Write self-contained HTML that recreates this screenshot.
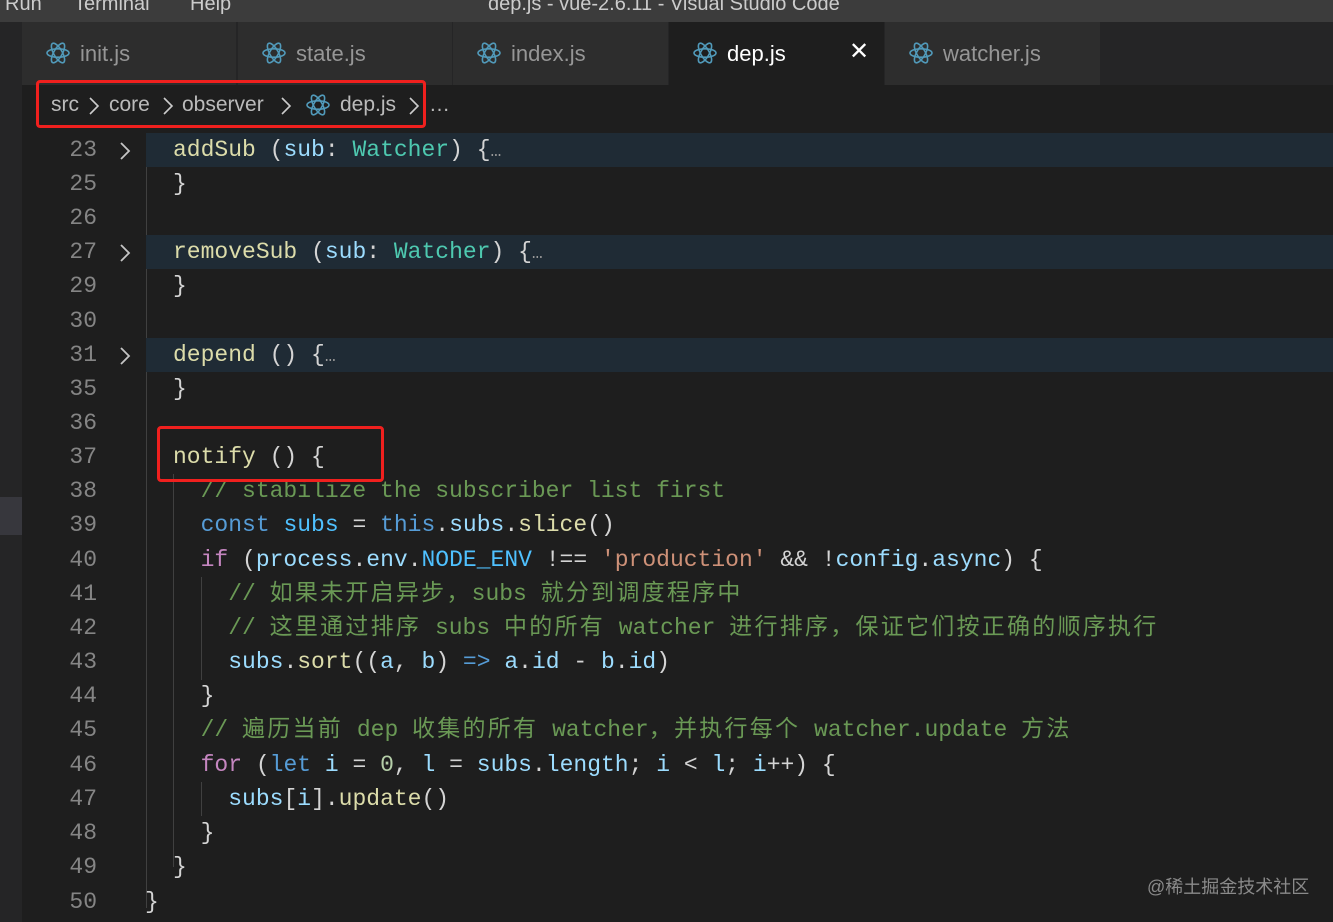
<!DOCTYPE html>
<html><head><meta charset="utf-8"><style>
*{margin:0;padding:0;box-sizing:border-box}
body{width:1333px;height:922px;background:#1e1e1e;overflow:hidden;position:relative;font-family:"Liberation Sans","Noto Sans CJK SC",sans-serif}
.title{position:absolute;left:0;top:0;width:1333px;height:22px;background:#3c3c3c;color:#ccc;font-size:20px;line-height:0;overflow:hidden}
.title span{position:absolute;top:-6px;line-height:20px}
.side{position:absolute;left:0;top:22px;width:22px;height:900px;background:#252526}
.tabs{position:absolute;left:22px;top:22px;width:1311px;height:63px;background:#252526}
.tab{position:absolute;top:0;height:63px;background:#2d2d2d;color:#969696;font-size:22px;line-height:63px;border-right:1px solid #252526}
.tab.a{background:#1e1e1e;color:#fff}
.tab svg{position:absolute;top:20px}
.tab span{position:absolute;top:0}
.bc{position:absolute;left:22px;top:85px;width:1311px;height:40px;background:#1e1e1e;color:#bbb;font-size:21px;line-height:40px}
.bc svg.ch{position:absolute;top:11px}
.code{position:absolute;left:22px;top:127px;width:1311px;height:795px;background:#1e1e1e}
.ln{position:absolute;left:0;width:75px;text-align:right;color:#858585;font:23px/34px "Liberation Mono",monospace}
.l{position:absolute;left:151px;height:34px;white-space:pre;font:23px/34px "Liberation Mono","Noto Sans CJK SC",monospace;color:#d4d4d4}
.z{letter-spacing:2.25px}
.hl{position:absolute;left:124px;width:1187px;height:34px;background:#1f2b35}
.f{color:#dcdcaa}.k{color:#569cd6}.v{color:#9cdcfe}.t{color:#4ec9b0}.c{color:#6a9955}.s{color:#ce9178}.p{color:#c586c0}.cn{color:#4fc1ff}
.e{color:#999;font-size:18px}
.g{position:absolute;width:1px;background:#404040}
.box{position:absolute;border:3px solid #f0201e;border-radius:4px}
.chev{position:absolute;left:96px}
</style></head><body>
<div class="title"><span style="left:5px">Run</span><span style="left:74px">Terminal</span><span style="left:190px">Help</span><span style="left:488px">dep.js - vue-2.6.11 - Visual Studio Code</span></div>
<div class="side"></div>
<div style="position:absolute;left:0;top:497px;width:22px;height:38px;background:#37373d"></div>
<div class="tabs">
<div class="tab" style="left:0;width:215px"><svg style="left:24px" width="24" height="22" viewBox="-12 -11 24 22"><g fill="none" stroke="#519aba" stroke-width="1.6"><ellipse rx="11" ry="4.2"/><ellipse rx="11" ry="4.2" transform="rotate(60)"/><ellipse rx="11" ry="4.2" transform="rotate(120)"/></g></svg><span style="left:58px">init.js</span></div>
<div class="tab" style="left:216px;width:215px"><svg style="left:24px" width="24" height="22" viewBox="-12 -11 24 22"><g fill="none" stroke="#519aba" stroke-width="1.6"><ellipse rx="11" ry="4.2"/><ellipse rx="11" ry="4.2" transform="rotate(60)"/><ellipse rx="11" ry="4.2" transform="rotate(120)"/></g></svg><span style="left:58px">state.js</span></div>
<div class="tab" style="left:431px;width:216px"><svg style="left:24px" width="24" height="22" viewBox="-12 -11 24 22"><g fill="none" stroke="#519aba" stroke-width="1.6"><ellipse rx="11" ry="4.2"/><ellipse rx="11" ry="4.2" transform="rotate(60)"/><ellipse rx="11" ry="4.2" transform="rotate(120)"/></g></svg><span style="left:58px">index.js</span></div>
<div class="tab a" style="left:647px;width:216px"><svg style="left:24px" width="24" height="22" viewBox="-12 -11 24 22"><g fill="none" stroke="#519aba" stroke-width="1.6"><ellipse rx="11" ry="4.2"/><ellipse rx="11" ry="4.2" transform="rotate(60)"/><ellipse rx="11" ry="4.2" transform="rotate(120)"/></g></svg><span style="left:58px">dep.js</span><span style="left:180px;font-size:24px;top:-2px">✕</span></div>
<div class="tab" style="left:863px;width:216px"><svg style="left:24px" width="24" height="22" viewBox="-12 -11 24 22"><g fill="none" stroke="#519aba" stroke-width="1.6"><ellipse rx="11" ry="4.2"/><ellipse rx="11" ry="4.2" transform="rotate(60)"/><ellipse rx="11" ry="4.2" transform="rotate(120)"/></g></svg><span style="left:58px">watcher.js</span></div>
</div>
<div class="bc"><span style="position:absolute;left:29px">src</span>
<svg class="ch" style="left:66px" width="12" height="20" viewBox="0 0 12 20"><path d="M2 2 L10 10 L2 18" fill="none" stroke="#ccc" stroke-width="1.6"/></svg>
<span style="position:absolute;left:87px">core</span>
<svg class="ch" style="left:140px" width="12" height="20" viewBox="0 0 12 20"><path d="M2 2 L10 10 L2 18" fill="none" stroke="#ccc" stroke-width="1.6"/></svg>
<span style="position:absolute;left:160px">observer</span>
<svg class="ch" style="left:258px" width="12" height="20" viewBox="0 0 12 20"><path d="M2 2 L10 10 L2 18" fill="none" stroke="#ccc" stroke-width="1.6"/></svg>
<svg style="position:absolute;left:284px;top:9px" width="24" height="22" viewBox="-12 -11 24 22"><g fill="none" stroke="#519aba" stroke-width="1.6"><ellipse rx="11" ry="4.2"/><ellipse rx="11" ry="4.2" transform="rotate(60)"/><ellipse rx="11" ry="4.2" transform="rotate(120)"/></g></svg><span style="position:absolute;left:318px">dep.js</span>
<svg class="ch" style="left:386px" width="12" height="20" viewBox="0 0 12 20"><path d="M2 2 L10 10 L2 18" fill="none" stroke="#ccc" stroke-width="1.6"/></svg>
<span style="position:absolute;left:407px">…</span></div>
<div class="code">
<div class="g" style="left:124px;top:6px;height:775px"></div>
<div class="g" style="left:151px;top:347px;height:393px"></div>
<div class="g" style="left:179px;top:450px;height:103px"></div>
<div class="g" style="left:179px;top:655px;height:34px"></div>
<div class="hl" style="top:6px"></div><div class="hl" style="top:108px"></div><div class="hl" style="top:211px"></div>
<svg class="chev" style="top:14px" width="14" height="20" viewBox="0 0 14 20"><path d="M3 2 L11 10 L3 18" fill="none" stroke="#c5c5c5" stroke-width="1.8"/></svg>
<svg class="chev" style="top:116px" width="14" height="20" viewBox="0 0 14 20"><path d="M3 2 L11 10 L3 18" fill="none" stroke="#c5c5c5" stroke-width="1.8"/></svg>
<svg class="chev" style="top:219px" width="14" height="20" viewBox="0 0 14 20"><path d="M3 2 L11 10 L3 18" fill="none" stroke="#c5c5c5" stroke-width="1.8"/></svg>
<div class="ln" style="top:6px">23</div>
<div class="l" style="top:6px"><span class="f">addSub</span> (<span class="v">sub</span>: <span class="t">Watcher</span>) {<span class="e">…</span></div>
<div class="ln" style="top:40px">25</div><div class="l" style="top:40px">}</div>
<div class="ln" style="top:74px">26</div>
<div class="ln" style="top:108px">27</div>
<div class="l" style="top:108px"><span class="f">removeSub</span> (<span class="v">sub</span>: <span class="t">Watcher</span>) {<span class="e">…</span></div>
<div class="ln" style="top:142px">29</div><div class="l" style="top:142px">}</div>
<div class="ln" style="top:177px">30</div>
<div class="ln" style="top:211px">31</div>
<div class="l" style="top:211px"><span class="f">depend</span> () {<span class="e">…</span></div>
<div class="ln" style="top:245px">35</div><div class="l" style="top:245px">}</div>
<div class="ln" style="top:279px">36</div>
<div class="ln" style="top:313px">37</div><div class="l" style="top:313px"><span class="f">notify</span> () {</div>
<div class="ln" style="top:347px">38</div><div class="l" style="top:347px">  <span class="c">// stabilize the subscriber list first</span></div>
<div class="ln" style="top:381px">39</div><div class="l" style="top:381px">  <span class="k">const</span> <span class="cn">subs</span> = <span class="k">this</span>.<span class="v">subs</span>.<span class="f">slice</span>()</div>
<div class="ln" style="top:416px">40</div><div class="l" style="top:416px">  <span class="p">if</span> (<span class="v">process</span>.<span class="v">env</span>.<span class="cn">NODE_ENV</span> !== <span class="s">'production'</span> &amp;&amp; !<span class="v">config</span>.<span class="v">async</span>) {</div>
<div class="ln" style="top:450px">41</div><div class="l" style="top:450px">    <span class="c">// <span class="z">如果未开启异步，</span>subs <span class="z">就分到调度程序中</span></span></div>
<div class="ln" style="top:484px">42</div><div class="l" style="top:484px">    <span class="c">// <span class="z">这里通过排序</span> subs <span class="z">中的所有</span> watcher <span class="z">进行排序，保证它们按正确的顺序执行</span></span></div>
<div class="ln" style="top:518px">43</div><div class="l" style="top:518px">    <span class="v">subs</span>.<span class="f">sort</span>((<span class="v">a</span>, <span class="v">b</span>) <span class="k">=&gt;</span> <span class="v">a</span>.<span class="v">id</span> - <span class="v">b</span>.<span class="v">id</span>)</div>
<div class="ln" style="top:552px">44</div><div class="l" style="top:552px">  }</div>
<div class="ln" style="top:586px">45</div><div class="l" style="top:586px">  <span class="c">// <span class="z">遍历当前</span> dep <span class="z">收集的所有</span> watcher<span class="z">，并执行每个</span> watcher.update <span class="z">方法</span></span></div>
<div class="ln" style="top:621px">46</div><div class="l" style="top:621px">  <span class="p">for</span> (<span class="k">let</span> <span class="v">i</span> = <span style="color:#b5cea8">0</span>, <span class="v">l</span> = <span class="v">subs</span>.<span class="v">length</span>; <span class="v">i</span> &lt; <span class="v">l</span>; <span class="v">i</span>++) {</div>
<div class="ln" style="top:655px">47</div><div class="l" style="top:655px">    <span class="v">subs</span>[<span class="v">i</span>].<span class="f">update</span>()</div>
<div class="ln" style="top:689px">48</div><div class="l" style="top:689px">  }</div>
<div class="ln" style="top:723px">49</div><div class="l" style="top:723px">}</div>
<div class="ln" style="top:758px">50</div><div class="l" style="top:758px;left:123px">}</div>
</div>
<div class="box" style="left:36px;top:80px;width:390px;height:48px"></div>
<div class="box" style="left:157px;top:426px;width:227px;height:56px"></div>
<div style="position:absolute;left:1147px;top:873px;color:#8a8a8a;font-size:18px;font-family:'Liberation Sans','Noto Sans CJK SC',sans-serif">@稀土掘金技术社区</div>
</body></html>
